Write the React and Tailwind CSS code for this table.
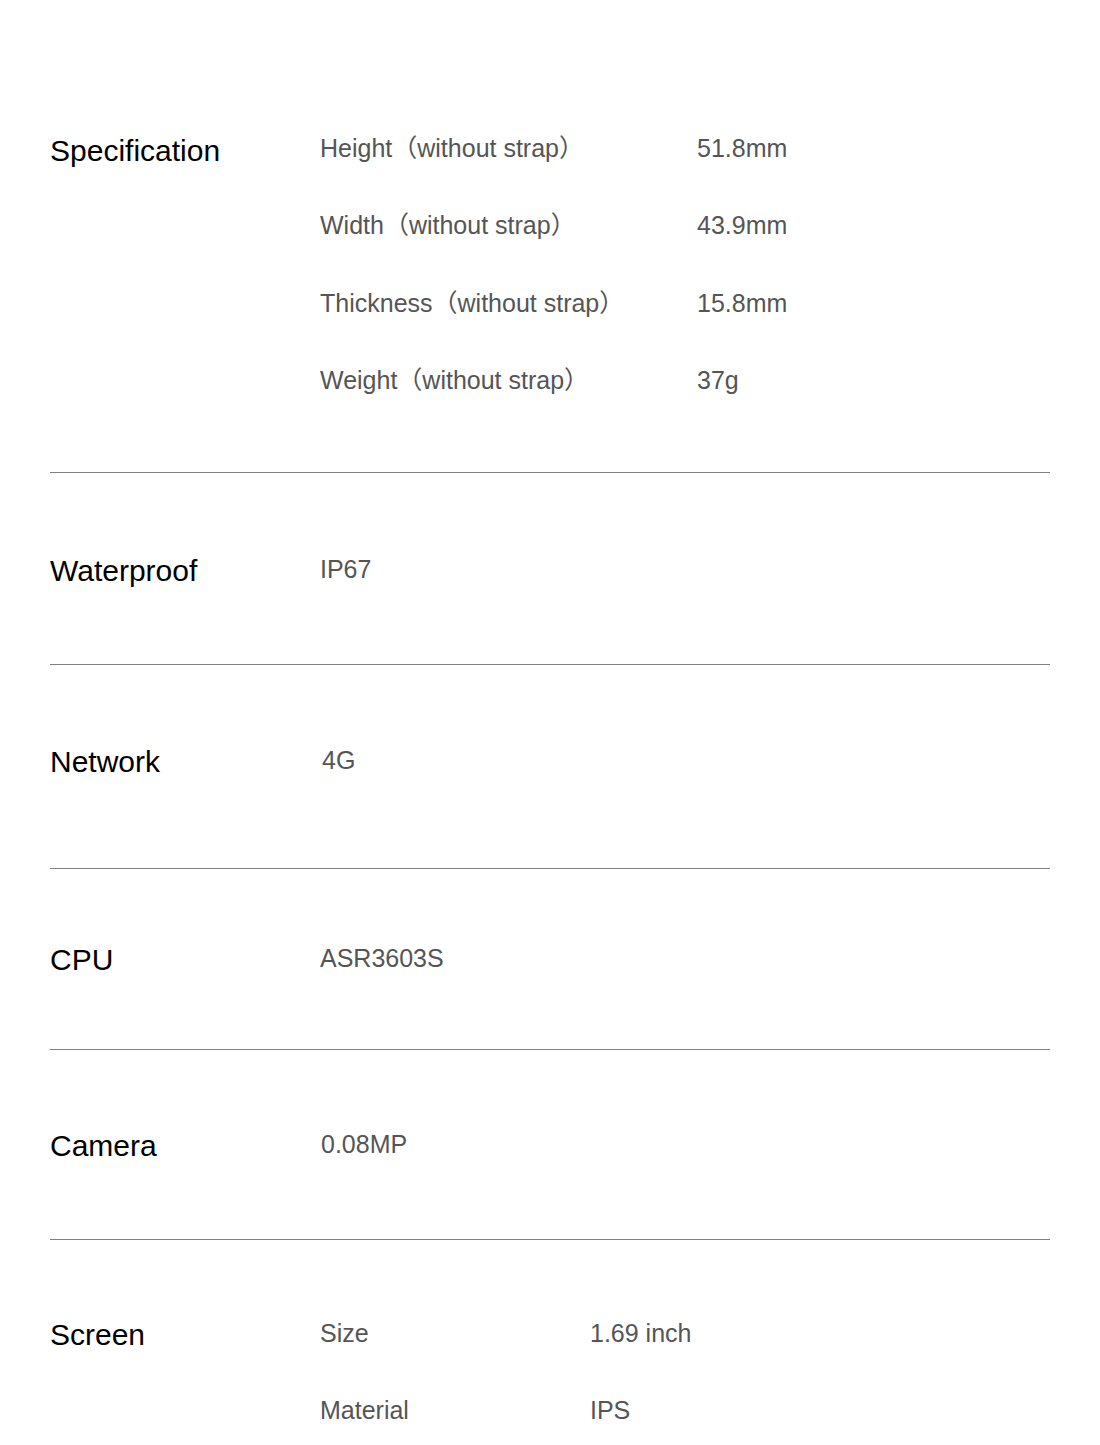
const specs = [
  ['Height（without strap）', '51.8mm'],
  ['Width（without strap）', '43.9mm'],
  ['Thickness（without strap）', '15.8mm'],
  ['Weight（without strap）', '37g'],
];

const screen = [
  ['Size', '1.69 inch'],
  ['Material', 'IPS'],
];

function Label({ children }) {
  return <h3 className="w-[270px] shrink-0 text-[30px] leading-[30px] text-black">{children}</h3>;
}

function Value({ children }) {
  return <p className="text-[25px] leading-[25px] text-[#555]">{children}</p>;
}

function App() {
  return (
    <div
      className="w-[1100px] h-[1445px] overflow-hidden bg-white px-[50px]"
      style={{ fontFamily: '"Liberation Sans", Arial, "Noto Sans CJK SC", sans-serif' }}
    >
      {/* Specification */}
      <section className="flex items-start pt-[136px] pb-[79px] border-b border-[#808080]">
        <Label>Specification</Label>
        <div className="flex flex-col gap-[52.33px]">
          {specs.map(([k, v]) => (
            <div key={k} className="flex">
              <div className="w-[377px] shrink-0">
                <Value>{k}</Value>
              </div>
              <Value>{v}</Value>
            </div>
          ))}
        </div>
      </section>

      {/* Waterproof */}
      <section className="flex items-start pt-[83px] pb-[78px] border-b border-[#808080]">
        <Label>Waterproof</Label>
        <div className="mt-px">
          <Value>IP67</Value>
        </div>
      </section>

      {/* Network */}
      <section className="flex items-start pt-[82px] pb-[91px] border-b border-[#808080]">
        <Label>Network</Label>
        <div className="mt-px pl-[2px]">
          <Value>4G</Value>
        </div>
      </section>

      {/* CPU */}
      <section className="flex items-start pt-[76px] pb-[74px] border-b border-[#808080]">
        <Label>CPU</Label>
        <div className="mt-px">
          <Value>ASR3603S</Value>
        </div>
      </section>

      {/* Camera */}
      <section className="flex items-start pt-[81px] pb-[78px] border-b border-[#808080]">
        <Label>Camera</Label>
        <div className="mt-px pl-px">
          <Value>0.08MP</Value>
        </div>
      </section>

      {/* Screen */}
      <section className="flex items-start pt-[80px]">
        <Label>Screen</Label>
        <div className="flex flex-col gap-[52.33px] mt-px">
          {screen.map(([k, v]) => (
            <div key={k} className="flex">
              <div className="w-[270px] shrink-0">
                <Value>{k}</Value>
              </div>
              <Value>{v}</Value>
            </div>
          ))}
        </div>
      </section>
    </div>
  );
}

export default App;
